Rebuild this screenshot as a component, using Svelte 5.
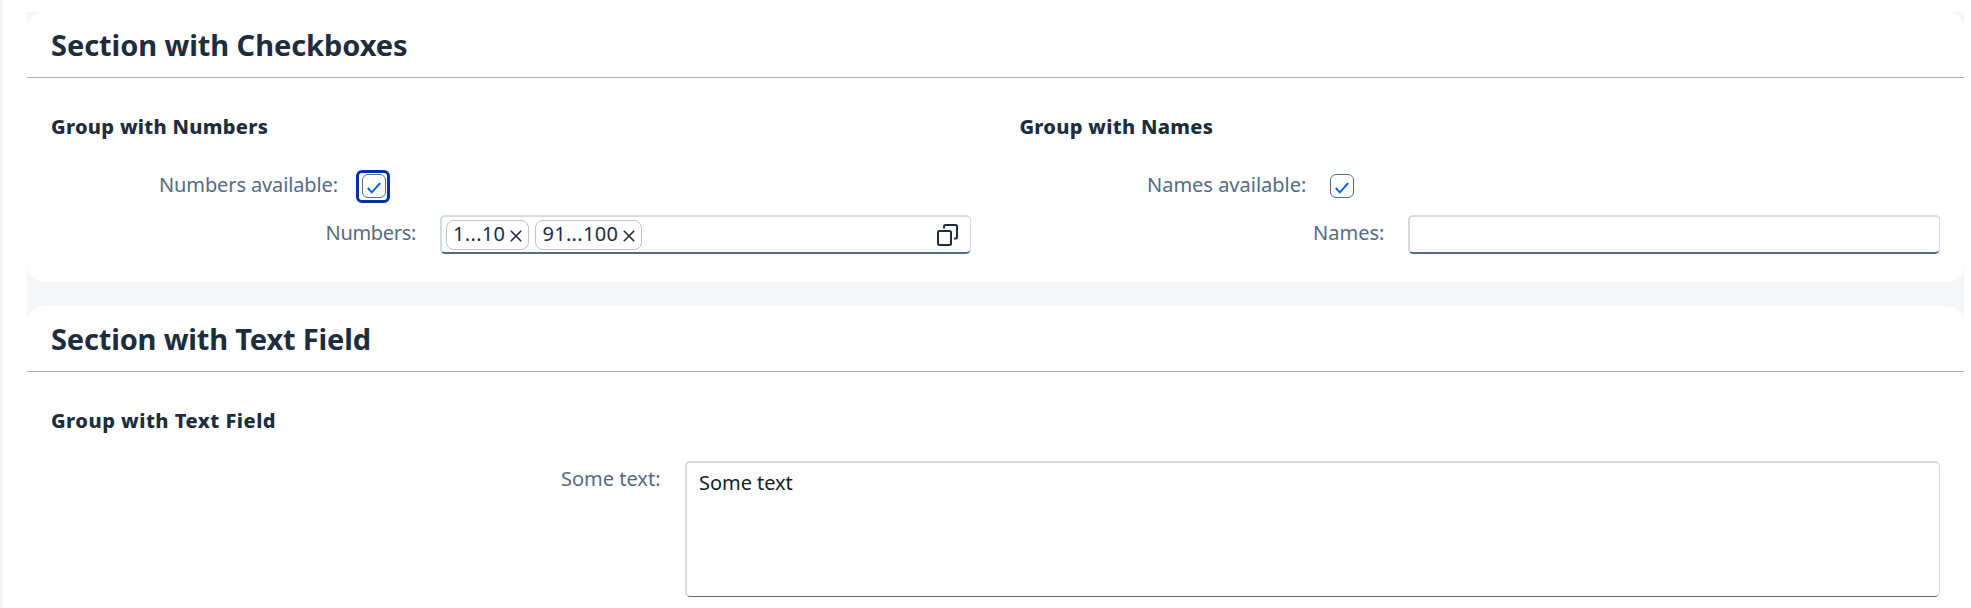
<script>
  let numbers = $state(['1...10', '91...100']);
  let text = $state('Some text');

  function remove(token) {
    numbers = numbers.filter((n) => n !== token);
  }
</script>

{#snippet checkbox(focused)}
  <span class="checkbox" class:focused role="checkbox" aria-checked="true" tabindex="0">
    <svg width="14" height="12" viewBox="0 0 14 12"><path d="M.8 6 4.8 10.4 13.2 1" /></svg>
  </span>
{/snippet}

<main>
  <section>
    <h1>Section with Checkboxes</h1>
    <div class="body columns">
      <div class="group">
        <h2>Group with Numbers</h2>
        <div class="row check">
          <span class="label tight">Numbers available:</span>
          {@render checkbox(true)}
        </div>
        <div class="row">
          <span class="label tighter">Numbers:</span>
          <div class="input">
            {#each numbers as token (token)}
              <span class="token">
                {token}
                <svg onclick={() => remove(token)} role="presentation" width="12" height="12" viewBox="0 0 12 12"><path d="M.8 .8 11.200 11.200M11.200 .8 .8 11.200" /></svg>
              </span>
            {/each}
            <svg class="help" width="22" height="22" viewBox="0 0 22 22">
              <rect x="1" y="7" width="13" height="14" rx="1.500" />
              <path d="M7 4.500V2.500Q7 1 8.500 1H18.500Q20 1 20 2.500V13Q20 14.500 18.500 14.500H17" />
            </svg>
          </div>
        </div>
      </div>
      <div class="group">
        <h2>Group with Names</h2>
        <div class="row check">
          <span class="label">Names available:</span>
          {@render checkbox(false)}
        </div>
        <div class="row">
          <span class="label">Names:</span>
          <div class="input"></div>
        </div>
      </div>
    </div>
  </section>

  <section class="last">
    <h1>Section with Text Field</h1>
    <div class="body">
      <h2 class="wide">Group with Text Field</h2>
      <div class="area-row">
        <span class="label">Some text:</span>
        <div class="area">{text}</div>
      </div>
    </div>
  </section>
</main>

<style>
  :global(body) {
    background: #fff;
    overflow: hidden;
  }
  main {
    box-sizing: border-box;
    height: 608px;
    padding: 12px 7px 0 24px;
    border-left: 3px solid #f5f6f7;
    font: 20px/30px 'Noto Sans', sans-serif;
    color: #1d2d3e;
    display: flex;
    flex-direction: column;
    background: linear-gradient(#f5f6f7, #f5f6f7) 24px 12px / calc(100% - 31px) 400px no-repeat;
  }
  section {
    box-sizing: border-box;
    height: 270px;
    margin-bottom: 24px;
    border-radius: 17px;
    background: #fff;
  }
  .last {
    flex: 1;
    margin: 0;
    border-radius: 17px 17px 0 0;
  }
  h1 {
    margin: 0;
    padding-left: 24px;
    font-size: 29px;
    font-weight: 700;
    line-height: 65px;
    letter-spacing: -0.07px;
    border-bottom: 1px solid #a4aeb6;
  }
  .last h1 {
    letter-spacing: -0.17px;
  }
  h2 {
    margin: 0 0 20px;
    font-size: 20px;
    font-weight: 800;
    line-height: 30px;
    letter-spacing: 0.3px;
  }
  h2.wide {
    letter-spacing: 0.5px;
    margin-bottom: 25px;
  }
  .body {
    padding: 34px 24px 0;
  }
  .columns {
    display: grid;
    grid-template-columns: 920px 920.6px;
    gap: 48.4px;
  }
  .row {
    display: grid;
    grid-template-columns: 365px 1fr;
    column-gap: 24px;
    align-items: center;
    height: 49px;
  }
  .row.check {
    grid-template-columns: 287px 24px;
    height: 48px;
  }
  .label {
    text-align: right;
    color: #556b82;
    padding-bottom: 4px;
  }
  .check .label {
    padding-bottom: 2px;
  }
  .tight {
    letter-spacing: -0.12px;
  }
  .tighter {
    letter-spacing: -0.33px;
  }
  .checkbox {
    box-sizing: border-box;
    position: relative;
    width: 24px;
    height: 24px;
    border: 1px solid #556b82;
    border-radius: 6px;
    display: grid;
    place-items: center;
    padding-top: 3px;
    outline: none;
  }
  .checkbox.focused::after {
    content: '';
    position: absolute;
    inset: -5px -5px -6px -7px;
    border: 3px solid #0032a5;
    border-radius: 6px;
  }
  .checkbox path {
    fill: none;
    stroke: #0064d9;
    stroke-width: 1.9;
  }
  .input {
    box-sizing: border-box;
    height: 39px;
    border: 2px solid #d5dadd;
    border-right-width: 1px;
    border-bottom-color: #556b82;
    border-radius: 5px;
    background: #fff;
    display: flex;
    align-items: center;
    gap: 6px;
    padding: 0 11px 0 4px;
  }
  .token {
    box-sizing: border-box;
    height: 30px;
    padding: 0 6px 1px;
    border: 1px solid #bcc3ca;
    border-radius: 8px;
    display: flex;
    align-items: center;
    gap: 5px;
    line-height: 26px;
    letter-spacing: 0.33px;
  }
  .token svg {
    margin-top: 3px;
  }
  .token path,
  .help path,
  .help rect {
    fill: none;
    stroke: #1d2d3e;
    stroke-width: 2;
  }
  .token path {
    stroke-width: 1.6;
  }
  .help {
    margin-left: auto;
  }
  .area-row {
    display: grid;
    grid-template-columns: 609.5px 1fr;
    column-gap: 24.5px;
    align-items: start;
  }
  .area-row .label {
    padding-top: 3px;
  }
  .area {
    box-sizing: border-box;
    height: 136px;
    padding: 5px 12px;
    border: 2px solid #d5dadd;
    border-right-width: 1px;
    border-bottom: 1px solid #556b82;
    border-radius: 5px;
    color: #131e29;
    letter-spacing: -0.05px;
  }
</style>
